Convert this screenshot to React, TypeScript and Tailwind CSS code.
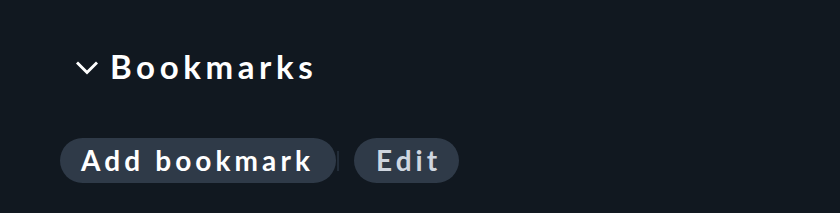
import React from "react";

function Chevron() {
  return (
    <svg width="22" height="14" viewBox="0 0 22 14" fill="none" className="shrink-0 mt-[3px]">
      <path d="M2 2.5 L11 11.5 L20 2.5" stroke="#ffffff" strokeWidth="3" strokeLinecap="square" />
    </svg>
  );
}

export default function App() {
  return (
    <div
      className="w-[840px] h-[213px] bg-[#111820] text-white"
      style={{ fontFamily: "Lato, 'Noto Sans', sans-serif" }}
    >
      <div className="pt-[45px] pl-[76px] flex items-center gap-[12px]">
        <Chevron />
        <h2 className="text-[33px] leading-[42px] font-bold tracking-[4.6px]">Bookmarks</h2>
      </div>
      <div className="mt-[51px] pl-[60px] flex items-center">
        <button className="h-[45px] pl-[21px] pr-[22px] rounded-full bg-[#2f3a48] text-[28px] leading-[45px] font-bold tracking-[4.1px] text-white">
          Add bookmark
        </button>
        <span className="ml-[1px] mr-[15px] w-[2px] h-[20px] bg-[#222c38]" />
        <button className="h-[45px] pl-[22px] pr-[18px] rounded-full bg-[#2f3a48] text-[28px] leading-[45px] font-bold tracking-[4px] text-[#cfd6e0]">
          Edit
        </button>
      </div>
    </div>
  );
}
